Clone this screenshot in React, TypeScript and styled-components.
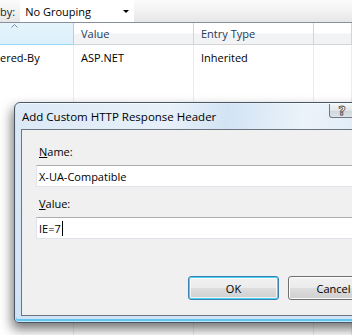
import React from 'react';
import styled, { createGlobalStyle } from 'styled-components';

const GlobalStyle = createGlobalStyle`
  html, body {
    margin: 0;
    padding: 0;
    background: #ffffff;
  }
`;

const Page = styled.div`
  position: relative;
  width: 352px;
  height: 335px;
  overflow: hidden;
  background: #ffffff;
  font-family: "Open Sans", "Noto Sans", sans-serif;
  font-size: 11px;
  color: #000;
`;

const Toolbar = styled.div`
  height: 22px;
  display: flex;
  align-items: center;
  gap: 5px;
  background: linear-gradient(#fbfbfb, #f2f2f2 50%, #e6e6e6);
  border-bottom: 1px solid #8a9099;
`;

const ToolLabel = styled.span`
  white-space: nowrap;
  color: #1e1e1e;
`;

const Combo = styled.div`
  width: 114px;
  height: 22px;
  display: flex;
  align-items: center;
  justify-content: space-between;
  padding: 0 5px;
  box-sizing: border-box;
  background: #ffffff;
`;

const ComboArrow = styled.span`
  width: 0;
  height: 0;
  border-left: 3px solid transparent;
  border-right: 3px solid transparent;
  border-top: 3px solid #000;
  margin-top: 1px;
`;

const Columns = '74px 120px 120px 1fr';

const HeaderRow = styled.div`
  display: grid;
  grid-template-columns: ${Columns};
  height: 22px;
`;

const HeaderCell = styled.div<{ $sorted?: boolean }>`
  position: relative;
  display: flex;
  align-items: center;
  padding-left: 7px;
  color: #1e395b;
  box-sizing: border-box;
  background: ${p => (p.$sorted ? 'linear-gradient(#e6f4fc, #dcf0fb)' : 'linear-gradient(#ffffff 45%, #f2f3f5 55%)')};
  border-right: 1px solid ${p => (p.$sorted ? '#96d9f9' : '#d5d5d5')};
  border-bottom: 1px solid ${p => (p.$sorted ? '#96d9f9' : '#d5d5d5')};
`;

const SortArrow = styled.svg`
  position: absolute;
  top: 1px;
  left: 11px;
`;

const Body = styled.div`
  display: grid;
  grid-template-columns: ${Columns};
  height: 290px;
`;

const BodyCell = styled.div`
  padding: 5px 0 0 7px;
  border-right: 1px solid #ececec;
  white-space: nowrap;
`;

const FirstCell = styled(BodyCell)`
  padding-left: 0;
`;

const Dialog = styled.div`
  position: absolute;
  left: 14px;
  top: 102px;
  width: 387px;
  height: 221px;
  box-sizing: border-box;
  display: flex;
  flex-direction: column;
  padding: 0 6px 6px 6px;
  border: 1px solid #4b5866;
  border-radius: 6px 6px 4px 4px;
  background: linear-gradient(#dce9f6, #d6e6f6 70%, #cfe3f6);
  box-shadow: -2px 6px 12px rgba(0, 0, 0, 0.55), 0 0 0 1px rgba(255, 255, 255, 0.6) inset,
    0 -2px 0 1px #62c5ef inset;
`;

const TitleBar = styled.div`
  height: 26px;
  display: flex;
  align-items: center;
  font-size: 11.5px;
  color: #000;
  white-space: nowrap;
  background: linear-gradient(
    100deg,
    rgba(255, 255, 255, 0) 0%,
    rgba(255, 255, 255, 0.35) 40%,
    rgba(205, 224, 242, 0.6) 55%,
    rgba(255, 255, 255, 0.45) 75%,
    rgba(255, 255, 255, 0) 100%
  );
  margin: 0 -6px;
  padding-left: 7px;
`;

const HelpButton = styled.div`
  position: absolute;
  left: 314px;
  top: 1px;
  width: 26px;
  height: 14px;
  box-sizing: border-box;
  border: 1px solid #707a86;
  border-top: none;
  border-radius: 0 0 3px 3px;
  background: linear-gradient(#f3f5f7, #e2e6ea 50%, #cfd5dc 51%, #dfe4e9);
  display: flex;
  align-items: center;
  justify-content: center;
  font-family: "DejaVu Sans", sans-serif;
  font-size: 13px;
  font-weight: bold;
  line-height: 1;
  color: #ffffff;
  -webkit-text-stroke: 0.8px #4a4a4a;
`;

const Client = styled.div`
  flex: 1;
  display: flex;
  flex-direction: column;
  padding: 14px 14px 15px 14px;
  background: #f0f0f0;
  border: 1px solid #6c7480;
`;

const FieldLabel = styled.div`
  height: 16px;
  line-height: 16px;
  padding-left: 3px;
  margin-bottom: 5px;
`;

const TextBox = styled.div`
  height: 22px;
  box-sizing: border-box;
  display: flex;
  align-items: center;
  padding-left: 2px;
  background: #ffffff;
  border: 1px solid #e2e3ea;
  border-top-color: #abadb3;
  white-space: nowrap;
`;

const Caret = styled.span`
  display: inline-block;
  width: 1px;
  height: 15px;
  margin-left: 1px;
  background: #000;
`;

const Spacer = styled.div<{ $h: number }>`
  height: ${p => p.$h}px;
  flex: none;
`;

const ButtonRow = styled.div`
  display: flex;
  justify-content: flex-end;
  gap: 9px;
`;

const Button = styled.div<{ $default?: boolean }>`
  width: 91px;
  height: 24px;
  box-sizing: border-box;
  display: flex;
  align-items: center;
  justify-content: center;
  border-radius: 3px;
  border: 1px solid ${p => (p.$default ? '#3c7fb1' : '#707070')};
  background: linear-gradient(#f2f2f2, #ebebeb 50%, #dddddd 51%, #cfcfcf);
  box-shadow: ${p =>
    p.$default ? 'inset 0 0 0 1px #48d1f9, inset 0 0 0 2px rgba(255,255,255,0.7)' : 'inset 0 0 0 1px #fcfcfc'};
`;

export default function App() {
  return (
    <Page>
      <GlobalStyle />
      <Toolbar>
        <ToolLabel>by:</ToolLabel>
        <Combo>
          No Grouping
          <ComboArrow />
        </Combo>
      </Toolbar>
      <HeaderRow>
        <HeaderCell $sorted>
          <SortArrow width="7" height="4" viewBox="0 0 7 4">
            <path d="M0.5 3.5 L3.5 0.5 L6.5 3.5" fill="none" stroke="#6e8db3" strokeWidth="1" />
          </SortArrow>
        </HeaderCell>
        <HeaderCell>Value</HeaderCell>
        <HeaderCell>Entry Type</HeaderCell>
        <HeaderCell />
      </HeaderRow>
      <Body>
        <FirstCell>ered-By</FirstCell>
        <BodyCell>ASP.NET</BodyCell>
        <BodyCell>Inherited</BodyCell>
        <BodyCell />
      </Body>

      <Dialog>
        <TitleBar>Add Custom HTTP Response Header</TitleBar>
        <HelpButton>?</HelpButton>
        <Client>
          <FieldLabel>
            <u>N</u>ame:
          </FieldLabel>
          <TextBox>X-UA-Compatible</TextBox>
          <Spacer $h={9} />
          <FieldLabel>
            <u>V</u>alue:
          </FieldLabel>
          <TextBox>
            IE=7
            <Caret />
          </TextBox>
          <Spacer $h={37} />
          <ButtonRow>
            <Button $default>OK</Button>
            <Button>Cancel</Button>
          </ButtonRow>
        </Client>
      </Dialog>
    </Page>
  );
}
